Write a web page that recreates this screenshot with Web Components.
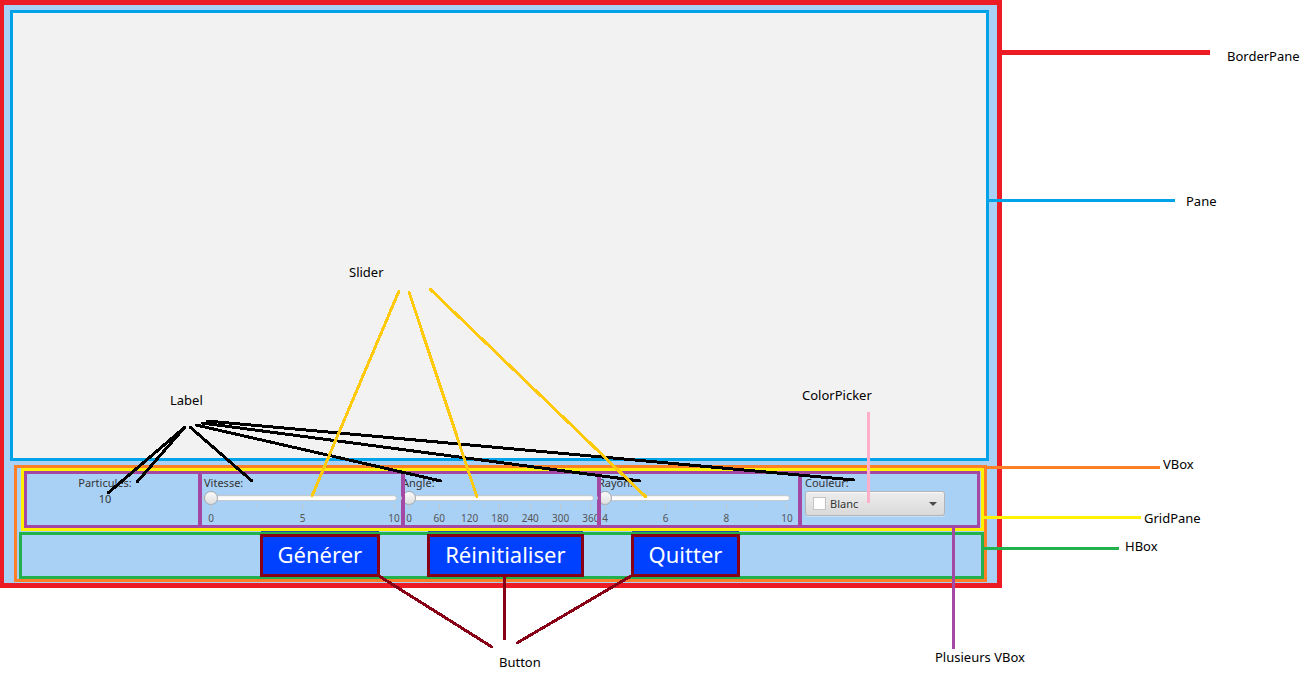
<!DOCTYPE html>
<html lang="fr">
<head>
<meta charset="utf-8">
<title>Structure de l'interface JavaFX</title>
<style>
  body { margin: 0; background: #fff; color: #000; font: 13px/16px "Noto Sans", sans-serif; }
</style>
</head>
<body>
<diagram-stage>
  <border-pane>
    <draw-pane></draw-pane>
    <control-stack>
      <grid-pane slot="grid">
        <v-box class="count"><fx-label>Particules:</fx-label><fx-label>10</fx-label></v-box>
        <v-box class="speed"><fx-slider label="Vitesse:" min="0" max="10" major="5"></fx-slider></v-box>
        <v-box class="angle"><fx-slider label="Angle:" min="0" max="360" major="60"></fx-slider></v-box>
        <v-box class="radius"><fx-slider label="Rayon:" min="4" max="10" major="2"></fx-slider></v-box>
        <v-box class="color"><fx-color-picker label="Couleur:"></fx-color-picker></v-box>
      </grid-pane>
      <h-box slot="actions">
        <fx-button>Générer</fx-button>
        <fx-button>Réinitialiser</fx-button>
        <fx-button>Quitter</fx-button>
      </h-box>
    </control-stack>
  </border-pane>
  <leader-lines slot="notes"></leader-lines>
  <call-out slot="notes" x="1227" y="48">BorderPane</call-out>
  <call-out slot="notes" x="1186" y="193">Pane</call-out>
  <call-out slot="notes" x="1163" y="456">VBox</call-out>
  <call-out slot="notes" x="1144" y="510">GridPane</call-out>
  <call-out slot="notes" x="1125" y="538">HBox</call-out>
  <call-out slot="notes" x="935" y="649">Plusieurs VBox</call-out>
  <call-out slot="notes" x="499" y="654">Button</call-out>
  <call-out slot="notes" x="802" y="387">ColorPicker</call-out>
  <call-out slot="notes" x="170" y="392">Label</call-out>
  <call-out slot="notes" x="349" y="264">Slider</call-out>
</diagram-stage>

<script>
const define = (name, html, setup) => customElements.define(name, class extends HTMLElement {
  constructor() {
    super();
    this.attachShadow({ mode: 'open' });
  }
  connectedCallback() {
    this.shadowRoot.innerHTML = typeof html === 'function' ? html(this) : html;
    if (setup) setup(this);
  }
});

define('diagram-stage', `
  <style>
    :host { display: grid; grid-template-columns: 1002fr 308fr; align-items: start; position: relative; min-height: 100vh; }
  </style>
  <slot></slot><slot name="notes"></slot>`);

define('border-pane', `
  <style>
    :host { display: flex; flex-direction: column; gap: 4px; padding: 5px 8px 1px 6px; background: #a9d0f5;
            border: 5px solid #ed1c24; border-left-width: 4px; }
  </style>
  <slot></slot>`);

define('draw-pane', `
  <style>
    :host { display: block; min-height: 445px; background: #f2f2f2; border: 3px solid #00a2e8; }
  </style>
  <slot></slot>`);

define('control-stack', `
  <style>
    :host { display: flex; flex-direction: column; gap: 1px; margin: 0 2px 0 4px; border: 3px solid #ff7f27; }
    .grid { padding-left: 4px; }
    .actions { padding-left: 2px; }
  </style>
  <div class="grid"><slot name="grid"></slot></div>
  <div class="actions"><slot name="actions"></slot></div>`);

define('grid-pane', `
  <style>
    :host { display: grid; grid-template-columns: 175fr 203fr 196fr 201fr 181fr; min-height: 57px;
            padding-right: 1px; border: 3px solid #fff200; }
    ::slotted(*) { margin-right: -2px; }
    ::slotted(:last-child) { margin-right: 0; }
    ::slotted(.count) { text-align: center; padding-right: 15px; }
    ::slotted(.speed) { padding: 0 6px 0 5px; }
    ::slotted(.angle) { padding-right: 5px; }
    ::slotted(.radius) { padding-right: 10px; }
    ::slotted(.color) { padding: 0 35px 0 6px; }
  </style>
  <slot></slot>`);

/* The frame is painted above the controls, which may run beneath it. */
define('v-box', `
  <style>
    :host { display: block; position: relative; min-width: 0; }
    .content { padding-top: 4px; }
    .frame { position: absolute; inset: 0; border: 3px solid #a349a4; pointer-events: none; }
  </style>
  <div class="content"><slot></slot></div><div class="frame"></div>`);

define('fx-label', `
  <style>
    :host { display: block; color: #333; font-size: 11px; line-height: 16px; }
  </style>
  <slot></slot>`);

define('fx-slider', el => {
  const min = +el.getAttribute('min'), max = +el.getAttribute('max'), major = +el.getAttribute('major');
  let ticks = '';
  for (let v = min; v <= max; v += major) {
    ticks += `<span class="major">${v}</span>`;
    if (v < max) ticks += '<span class="minor"></span>';
  }
  return `
  <style>
    :host { display: block; }
    label { display: block; color: #333; font-size: 11px; line-height: 16px; }
    input { display: block; appearance: none; width: 100%; height: 14px; margin: 0 0 0 -1px; background: none; }
    input::-webkit-slider-runnable-track { height: 6px; box-sizing: border-box; border: 1px solid #c2c8cd;
      border-radius: 3px; background: linear-gradient(#eee, #fff 50%); }
    input::-webkit-slider-thumb { appearance: none; width: 14px; height: 14px; margin-top: -5px; box-sizing: border-box;
      border: 1px solid #a3a8ad; border-radius: 50%; background: linear-gradient(#fafafa, #dedede); }
    .axis { display: flex; justify-content: space-between; padding: 0 4px 0 7px; margin-top: -1px; }
    .axis span { width: 0; display: flex; flex-direction: column; align-items: center; color: #555;
      font-size: 10px; line-height: 12px; }
    .axis span::before { content: ""; flex: none; width: 1px; background: #c0c8ce; }
    .axis .major::before { height: 6px; margin-bottom: 2px; }
    .axis .minor::before { height: 2px; margin-top: 1px; }
  </style>
  <label for="s">${el.getAttribute('label')}</label>
  <input id="s" type="range" min="${min}" max="${max}" value="${min}">
  <div class="axis">${ticks}</div>`;
});

define('fx-color-picker', el => `
  <style>
    :host { display: block; }
    label { display: block; color: #333; font-size: 11px; line-height: 16px; }
    .field { position: relative; }
    select { display: block; appearance: none; width: 100%; height: 25px; padding: 0 24px; margin: 0; box-sizing: border-box;
      border: 1px solid #b4b4b4; border-radius: 3px; background: linear-gradient(#ededed, #d9d9d9);
      box-shadow: inset 0 1px #fafafa, 0 1px #c9e1f6; color: #333; font: 11px/16px "Noto Sans", sans-serif; }
    .swatch { position: absolute; left: 8px; top: 6px; width: 11px; height: 11px; border: 1px solid #c4c4c4;
      background: #fff; pointer-events: none; }
    svg { position: absolute; right: 8px; top: 11px; pointer-events: none; }
  </style>
  <label for="c">${el.getAttribute('label')}</label>
  <div class="field">
    <select id="c"><option>Blanc</option></select>
    <span class="swatch"></span>
    <svg width="8" height="4" viewBox="0 0 8 4"><path d="M0 0h8L4 4z" fill="#4a4a4a"/></svg>
  </div>`);

define('h-box', `
  <style>
    :host { display: flex; justify-content: center; align-items: center; gap: 47px; height: 41px;
            padding-right: 3px; border: 3px solid #22b14c; }
  </style>
  <slot></slot>`);

define('fx-button', `
  <style>
    :host { display: block; }
    button { position: relative; display: block; height: 43px; margin: 0; padding: 0 15px 4px; border: 3px solid #880015;
      background: #0040ff; color: #fff; font: 22px/32px "Noto Sans", sans-serif; }
    button::before { content: ""; position: absolute; left: -2px; right: -2px; top: -6px; height: 1px; background: #2450b8; }
  </style>
  <button type="button"><slot></slot></button>`);

define('leader-lines', `
  <style>
    :host { position: absolute; inset: 0 0 auto 0; pointer-events: none; }
    svg { display: block; width: 100%; height: 682px; }
    path { fill: none; stroke-width: 3px; vector-effect: non-scaling-stroke; }
    .round { stroke-linecap: round; }
  </style>
  <svg viewBox="0 0 1310 682" preserveAspectRatio="none" shape-rendering="crispEdges" aria-hidden="true">
    <path stroke="#ed1c24" style="stroke-width:5px" d="M1001 52.5H1210"/>
    <path stroke="#00a2e8" d="M988 200.5H1175"/>
    <path stroke="#ff7f27" d="M986 467.5H1160"/>
    <path stroke="#fff200" d="M983 517.5H1141"/>
    <path stroke="#22b14c" d="M983 548.5H1119"/>
    <path stroke="#a349a4" d="M953.5 528V649"/>
    <path class="round" stroke="#000" d="M185 427L108 493M185 427L137 482M190 427L252 481M196 425L441 481M202 423L640 481M207 421L854 480"/>
    <path class="round" stroke="#ffc90e" d="M399 291L312 496M409 292L477 497M430 289L646 497"/>
    <path stroke="#ffaec9" d="M868.5 412V503"/>
    <path class="round" stroke="#880015" d="M379 576L492 647M504.5 575V639M631 576L517 643"/>
  </svg>`);

define('call-out', `
  <style>
    :host { position: absolute; white-space: nowrap; }
  </style>
  <slot></slot>`, el => {
  el.style.left = `calc(${el.getAttribute('x')} / 1310 * 100%)`;
  el.style.top = `${el.getAttribute('y')}px`;
});
</script>
</body>
</html>
